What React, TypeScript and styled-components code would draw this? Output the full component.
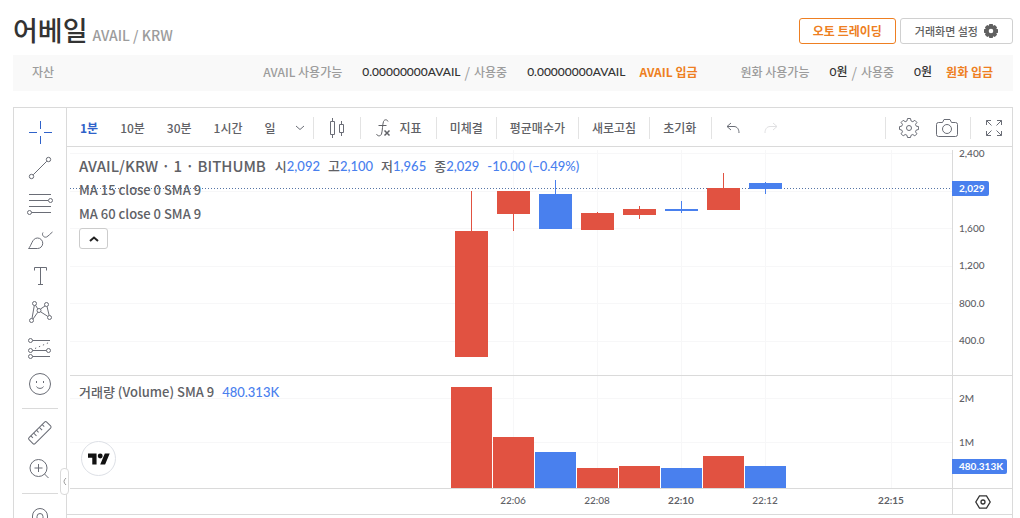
import React from 'react';
import styled, { createGlobalStyle } from 'styled-components';

const KR = `"Noto Sans CJK KR", "Noto Sans", sans-serif`;
const NUM = `Lato, "Noto Sans CJK KR", sans-serif`;
const RED = '#e15241';
const BLUE = '#4980ee';
const ORANGE = '#ee7f22';
const LINE = '#dadada';
const TEXT = '#606166';

const GlobalStyle = createGlobalStyle`
  *, *::before, *::after { box-sizing: border-box; }
  body { margin: 0; background: #fff; font-family: ${KR}; color: ${TEXT}; }
  button { font: inherit; color: inherit; background: none; border: 0; padding: 0; cursor: pointer; }
  svg { display: block; }
`;

const Page = styled.div`
  display: flex;
  flex-direction: column;
  height: 100vh;
  overflow: hidden;
  padding: 12px 7px 0 13px;
`;

const Header = styled.header`
  display: flex;
  align-items: center;
  justify-content: space-between;
  height: 38px;
`;

const Title = styled.h1`
  display: flex;
  align-items: baseline;
  gap: 5px;
  margin: 0;
  padding-top: 2px;
  font-size: 27px;
  line-height: 38px;
  font-weight: 500;
  color: #333;
`;

const Pair = styled.span`
  font-size: 14px;
  font-weight: 500;
  color: #9c9c9c;
`;

const HeaderActions = styled.div`
  display: flex;
  gap: 4px;
`;

const OutlineButton = styled.button<{ $accent?: boolean }>`
  display: flex;
  align-items: center;
  gap: 6px;
  height: 26px;
  padding: 0 ${(p) => (p.$accent ? 13 : 14)}px;
  border: 1px solid ${(p) => (p.$accent ? ORANGE : '#d0d0d0')};
  border-radius: 3px;
  font-size: ${(p) => (p.$accent ? 12 : 11)}px;
  line-height: 24px;
  font-weight: ${(p) => (p.$accent ? 700 : 500)};
  color: ${(p) => (p.$accent ? ORANGE : '#606060')};
`;

const AssetBar = styled.section`
  display: flex;
  align-items: center;
  flex-shrink: 0;
  height: 36px;
  margin-top: 5px;
  padding: 0 20px 2px 19px;
  background: #f9f9f9;
  font-size: 12px;
  line-height: 18px;
  font-weight: 500;
  color: #9c9c9c;
`;

const AssetGroup = styled.div<{ $first?: boolean }>`
  display: flex;
  align-items: center;
  margin-left: ${(p) => (p.$first ? 'auto' : '43px')};
`;

const Amount = styled.span`
  margin-left: 20px;
  font-family: ${NUM};
  color: #333;
`;

const Slash = styled.span`
  margin: 0 4px;
  font-size: 14px;
  font-weight: 400;
`;

const DepositLink = styled.a`
  margin-left: 14px;
  font-weight: 700;
  color: ${ORANGE};
  text-decoration: none;
`;

const Widget = styled.main`
  display: flex;
  flex: 1;
  min-height: 0;
  margin-top: 16px;
  border: 1px solid ${LINE};
  border-bottom: 0;
`;

const Sidebar = styled.nav`
  position: relative;
  display: flex;
  flex-direction: column;
  flex-shrink: 0;
  width: 53px;
  padding-top: 6px;
  border-right: 1px solid ${LINE};
`;

const ToolButton = styled.button<{ $active?: boolean }>`
  display: flex;
  align-items: center;
  justify-content: center;
  flex-shrink: 0;
  height: 36px;
  color: ${(p) => (p.$active ? '#2f62c9' : '#6a6d76')};
`;

const ToolRule = styled.hr`
  flex-shrink: 0;
  width: 36px;
  height: 1px;
  margin: 6px auto;
  border: 0;
  background: ${LINE};
`;

const CollapseHandle = styled.button`
  position: absolute;
  right: -3px;
  top: 360px;
  display: flex;
  align-items: center;
  justify-content: center;
  width: 9px;
  height: 27px;
  border: 1px solid ${LINE};
  border-radius: 4px;
  background: #fff;
  color: #9a9a9a;
`;

const Content = styled.div`
  display: flex;
  flex-direction: column;
  flex: 1;
  min-width: 0;
`;

const Toolbar = styled.div`
  display: flex;
  align-items: center;
  flex-shrink: 0;
  height: 39px;
  padding: 2px 0 0 2px;
  border-bottom: 1px solid ${LINE};
  font-size: 12px;
  line-height: 18px;
  font-weight: 500;
`;

const BarButton = styled.button<{ $pad?: number; $active?: boolean }>`
  display: flex;
  align-items: center;
  justify-content: center;
  gap: 9px;
  height: 36px;
  padding: 0 ${(p) => p.$pad ?? 11}px;
  white-space: nowrap;
  font-weight: ${(p) => (p.$active ? 700 : 500)};
  color: ${(p) => (p.$active ? '#2f62c9' : TEXT)};
`;

const IconButton = styled.button<{ $width: number; $faded?: boolean }>`
  display: flex;
  align-items: center;
  justify-content: center;
  width: ${(p) => p.$width}px;
  height: 36px;
  color: ${(p) => (p.$faded ? '#e0e0e2' : '#6a6d76')};
`;

const BarRule = styled.span<{ $gap?: number }>`
  width: 1px;
  height: 22px;
  margin: 0 ${(p) => p.$gap ?? 0}px;
  background: #e3e3e3;
`;

const Spacer = styled.span`
  flex: 1;
`;

const ChartGrid = styled.div`
  display: grid;
  grid-template-columns: minmax(0, 1fr) 60px;
  grid-template-rows: 226px 113px 25px;
  flex-shrink: 0;
  padding: 3px 0 0 3px;
  border-bottom: 1px solid ${LINE};
`;

const Pane = styled.div<{ $last?: boolean }>`
  position: relative;
  overflow: hidden;
  border-bottom: ${(p) => (p.$last ? 0 : 1)}px solid ${LINE};
`;

const AxisPane = styled(Pane)`
  border-left: 1px solid ${LINE};
  overflow: visible;
`;

const Plot = styled.svg`
  width: 100%;
  height: 100%;
`;

const AxisPlot = styled(Plot)`
  overflow: visible;
`;

const AxisLabel = styled.text<{ $bold?: boolean }>`
  font-family: ${NUM};
  font-size: 10px;
  font-weight: ${(p) => (p.$bold ? 700 : 500)};
  fill: ${TEXT};
`;

const AxisTag = styled.span<{ $top: number }>`
  position: absolute;
  left: -1px;
  top: ${(p) => p.$top}px;
  height: 15px;
  padding: 0 4px 0 7px;
  border-radius: 0 2px 2px 0;
  background: ${BLUE};
  color: #fff;
  font-family: ${NUM};
  font-size: 10px;
  line-height: 15px;
  font-weight: 700;
`;

const Legend = styled.div`
  position: absolute;
  left: 9px;
  top: 4px;
  display: flex;
  flex-direction: column;
  align-items: flex-start;
  font-size: 13px;
  line-height: 24px;
  font-weight: 500;
  white-space: nowrap;
`;

const LegendRow = styled.div`
  display: flex;
  align-items: center;
  gap: 8px;
  height: 24px;
`;

const Symbol = styled.span`
  font-size: 15px;
  margin-right: 1px;
`;

const Value = styled.span`
  font-family: ${NUM};
  color: ${BLUE};
`;

const FoldButton = styled.button`
  display: flex;
  align-items: center;
  justify-content: center;
  width: 29px;
  height: 21px;
  margin-top: 2px;
  border: 1px solid #ccc;
  border-radius: 3px;
  background: #fff;
  color: #222;
`;

const Brand = styled.a`
  position: absolute;
  left: 11px;
  bottom: 12px;
  display: flex;
  align-items: center;
  justify-content: center;
  width: 35px;
  height: 35px;
  border: 1px solid #dde0e6;
  border-radius: 50%;
  background: #fff;
`;

const AxisSettings = styled.button`
  display: flex;
  align-items: center;
  justify-content: center;
  width: 100%;
  height: 25px;
  color: #333;
`;

type IconProps = { w?: number; h?: number; sw?: number; children: React.ReactNode };
const Icon = ({ w = 28, h = 28, sw = 1, children }: IconProps) => (
  <svg width={w} height={h} viewBox={`0 0 ${w} ${h}`} fill="none" stroke="currentColor" strokeWidth={sw} aria-hidden="true">
    {children}
  </svg>
);

const tools: { name: string; icon: React.ReactNode; active?: boolean; rule?: boolean }[] = [
  { name: '십자선', active: true, icon: <path d="M14.5 3v8M14.5 18v8M3 14.5h8M18 14.5h8" /> },
  {
    name: '추세선',
    icon: <><circle cx="5.5" cy="22.5" r="2.2" /><circle cx="22.5" cy="5.5" r="2.2" /><path d="M7.2 20.8L20.8 7.2" /></>,
  },
  {
    name: '피보나치',
    icon: <><path d="M3 4.5h22M3 10.5h19M3 16.5h22M5.5 22.5h19.5" /><circle cx="24.5" cy="10.5" r="2" /><circle cx="3.5" cy="22.5" r="2" /></>,
  },
  {
    name: '브러시',
    icon: <path d="M2.5 22.5c3-2.500 3.500-10.500 9-10.500a5.200 5.200 0 010 10.500zM17 6.500c-1.500 2 .5 5.500 3.500 4.500c2-1 4-3.500 6-5" />,
  },
  { name: '텍스트', icon: <path d="M8.500 8.500v-3h12v3M14.500 5.500v17M12 22.500h5" /> },
  {
    name: '패턴',
    icon: <><circle cx="8.500" cy="5.500" r="2" /><circle cx="20.500" cy="6.500" r="2" /><circle cx="5.500" cy="22.500" r="2" /><circle cx="23.500" cy="19.500" r="2" /><circle cx="13" cy="12.500" r="2" /><path d="M8.300 7.500L6 20.500M9.500 7.200l2.300 3.700M19 8l-4.500 3M21 8.500l2.200 9M14.600 13.800l7.200 4.600M11.800 14.200L7 21" /></>,
  },
  {
    name: '예측',
    icon: <><circle cx="4.500" cy="6.500" r="2" /><circle cx="4.500" cy="16.500" r="2" /><circle cx="22.500" cy="16.500" r="2" /><circle cx="4.500" cy="22.500" r="2" /><path d="M6.500 6.500H24M6.500 16.500h14M6.500 22.500H24" /><path d="M9 14.500l14-6" strokeDasharray="1.300 3" /></>,
  },
  {
    name: '아이콘',
    rule: true,
    icon: <><circle cx="14" cy="14" r="10.500" /><path d="M10.500 16.500c1 2.500 6 2.500 7 0M10.500 11v2M17.500 11v2" /></>,
  },
  {
    name: '측정',
    icon: <g transform="rotate(-45 14 14)"><rect x="1.500" y="9.500" width="25" height="8.500" rx="1.500" /><path d="M5.500 9.500v3M9.500 9.500v4M13.500 9.500v3M17.500 9.500v4M21.500 9.500v3" /></g>,
  },
  {
    name: '확대',
    rule: true,
    icon: <><circle cx="12.500" cy="13" r="8.500" /><path d="M12.500 9v8M8.500 13h8M18.500 19l4 4" /></>,
  },
  {
    name: '자석',
    icon: <path d="M6.500 22V12a7.500 7.500 0 0115 0v10h-4.500V12.500a3 3 0 00-6 0V22z" />,
  },
];

// left, body top, body height, wick top, wick height (plot pixels), rising
const candles: [number, number, number, number, number, boolean][] = [
  [385, 81, 126, 41, 41, true],
  [427, 41, 23, 41, 40, true],
  [469, 44, 35, 30, 15, false],
  [511, 63, 17, 62, 2, true],
  [553, 59, 6, 56, 13, true],
  [595, 59, 2, 51, 12, false],
  [637, 38, 22, 23, 16, true],
  [679, 33, 6, 32, 12, false],
];

// left, height, rising
const volumes: [number, number, boolean][] = [
  [381, 101, true],
  [423, 51, true],
  [465, 36, false],
  [507, 20, true],
  [549, 22, true],
  [591, 20, false],
  [633, 32, true],
  [675, 22, false],
];

const timeGrid = [443, 527, 611, 695, 821];
const priceGrid = [3, 41, 78, 116, 153, 191];
const volumeGrid = [22, 66];

const Grid = ({ rows }: { rows: number[] }) => (
  <g stroke="#f7f7f8" shapeRendering="crispEdges">
    {timeGrid.map((x) => <line key={x} x1={x + 0.5} x2={x + 0.5} y1={0} y2={240} />)}
    {rows.map((y) => <line key={y} x1={-2000} x2={882} y1={y + 0.5} y2={y + 0.5} />)}
  </g>
);

const ohlc = [['시', '2,092'], ['고', '2,100'], ['저', '1,965'], ['종', '2,029']];

export default function App() {
  return (
    <>
      <GlobalStyle />
      <Page>
        <Header>
          <Title>어베일<Pair>AVAIL / KRW</Pair></Title>
          <HeaderActions>
            <OutlineButton $accent>오토 트레이딩</OutlineButton>
            <OutlineButton>
              거래화면 설정
              <svg width="14" height="14" viewBox="0 0 14 14" fill="#606060" aria-hidden="true">
                <path fillRule="evenodd" d="M5.300 0h3.400l.5 1.700 1.600-.8 2.300 2.300-.8 1.600 1.700.5v3.400l-1.700.5.8 1.600-2.300 2.300-1.600-.8-.5 1.700H5.300l-.5-1.700-1.600.8L.9 10.800l.8-1.600L0 8.700V5.300l1.700-.5L.9 3.200 3.200.9l1.600.8zM7 4.700a2.300 2.300 0 100 4.600 2.300 2.300 0 000-4.600z" />
              </svg>
            </OutlineButton>
          </HeaderActions>
        </Header>

        <AssetBar>
          <span>자산</span>
          <AssetGroup $first>
            <span>AVAIL 사용가능</span>
            <Amount>0.00000000AVAIL</Amount>
            <Slash>/</Slash>
            <span>사용중</span>
            <Amount>0.00000000AVAIL</Amount>
            <DepositLink href="#avail">AVAIL 입금</DepositLink>
          </AssetGroup>
          <AssetGroup>
            <span>원화 사용가능</span>
            <Amount>0원</Amount>
            <Slash>/</Slash>
            <span>사용중</span>
            <Amount>0원</Amount>
            <DepositLink href="#krw">원화 입금</DepositLink>
          </AssetGroup>
        </AssetBar>

        <Widget>
          <Sidebar>
            {tools.map((t) => (
              <React.Fragment key={t.name}>
                <ToolButton $active={t.active} aria-label={t.name}><Icon>{t.icon}</Icon></ToolButton>
                {t.rule && <ToolRule />}
              </React.Fragment>
            ))}
            <CollapseHandle aria-label="접기">
              <Icon w={5} h={9}><path d="M4 1Q0 4.500 4 8" /></Icon>
            </CollapseHandle>
          </Sidebar>

          <Content>
            <Toolbar>
              <BarButton $active>1분</BarButton>
              <BarButton>10분</BarButton>
              <BarButton>30분</BarButton>
              <BarButton>1시간</BarButton>
              <BarButton>일</BarButton>
              <IconButton $width={26} aria-label="시간 간격">
                <Icon w={10} h={6}><path d="M1 1l4 3.500L9 1" /></Icon>
              </IconButton>
              <BarRule />
              <IconButton $width={46} aria-label="캔들">
                <Icon w={16} h={20}><path d="M1.500 3.500h4v13h-4zM3.500 0v3.500M3.500 16.500V20M10.500 6.500h4v8h-4zM12.500 3v3.500M12.500 14.500V18" /></Icon>
              </IconButton>
              <BarRule />
              <BarButton $pad={14}>
                <Icon w={16} h={20}><path d="M13 3.500c-.5-2-3.500-2.500-4.500 0C7.500 6 7.500 13 6.500 16c-1 2.500-4 2.500-5 0M3.500 7.500h8" /><path d="M9.500 12.500l5 5M14.500 12.500l-5 5" strokeWidth="1.500" /></Icon>
                지표
              </BarButton>
              <BarRule />
              <BarButton $pad={13}>미체결</BarButton>
              <BarRule />
              <BarButton $pad={13}>평균매수가</BarButton>
              <BarRule />
              <BarButton $pad={13}>새로고침</BarButton>
              <BarRule />
              <BarButton $pad={13}>초기화</BarButton>
              <BarRule $gap={2} />
              <IconButton $width={38} aria-label="실행 취소">
                <Icon w={14} h={12}><path d="M5 1L1 4.500 5 8M1 4.500h7c3 0 5 2.500 5 6.500" /></Icon>
              </IconButton>
              <IconButton $width={38} $faded aria-label="다시 실행">
                <Icon w={14} h={12}><path d="M9 1l4 3.500L9 8M13 4.500H6c-3 0-5 2.500-5 6.500" /></Icon>
              </IconButton>
              <Spacer />
              <BarRule $gap={4} />
              <IconButton $width={38} aria-label="설정">
                <Icon w={20} h={20}>
                  <path strokeLinejoin="round" d="M8.500.5h3l.5 2.400 1.800.8 2-1.400 2.100 2.100-1.400 2 .8 1.800 2.300.4v2.900l-2.300.5-.8 1.800 1.400 2-2.100 2.100-2-1.400-1.800.8-.5 2.200h-3L8 17.300l-1.800-.8-2 1.400-2.100-2.100 1.400-2-.8-1.800-2.200-.5V8.600l2.200-.4.8-1.800-1.400-2 2.100-2.100 2 1.400L8 2.900z" />
                  <circle cx="10" cy="10" r="2.500" />
                </Icon>
              </IconButton>
              <IconButton $width={38} aria-label="스냅샷">
                <Icon w={22} h={18}>
                  <path d="M2.500 3.500h4l1.500-3h6l1.500 3h4a2 2 0 012 2v10a2 2 0 01-2 2h-17a2 2 0 01-2-2v-10a2 2 0 012-2z" />
                  <circle cx="11" cy="10" r="4.500" />
                </Icon>
              </IconButton>
              <BarRule $gap={4} />
              <IconButton $width={37} aria-label="전체 화면">
                <Icon w={18} h={18}><path d="M1.500 6V1.500H6M1.500 1.500l5 5M12 1.500h4.500V6M16.500 1.500l-5 5M1.500 12v4.500H6M1.500 16.500l5-5M12 16.500h4.500V12M16.500 16.500l-5-5" /></Icon>
              </IconButton>
            </Toolbar>

            <ChartGrid>
              <Pane>
                <Plot viewBox="0 0 882 225" preserveAspectRatio="xMaxYMin slice">
                  <Grid rows={priceGrid} />
                  <line x1={0} x2={882} y1={38.5} y2={38.5} stroke="#5574a6" strokeDasharray="1 2" />
                  {candles.map(([x, top, h, wickTop, wickH, up]) => (
                    <g key={x} fill={up ? RED : BLUE} shapeRendering="crispEdges">
                      <rect x={x + 16} y={wickTop} width={1} height={wickH} />
                      <rect x={x} y={top} width={33} height={h} />
                    </g>
                  ))}
                </Plot>
                <Legend>
                  <LegendRow>
                    <Symbol>AVAIL/KRW · 1 · BITHUMB</Symbol>
                    {ohlc.map(([k, v]) => <span key={k}>{k}<Value>{v}</Value></span>)}
                    <Value>-10.00 (−0.49%)</Value>
                  </LegendRow>
                  <span>MA 15 close 0 SMA 9</span>
                  <span>MA 60 close 0 SMA 9</span>
                  <FoldButton aria-label="지표 접기">
                    <Icon w={10} h={6} sw={2}><path d="M1 5l4-3.500L9 5" /></Icon>
                  </FoldButton>
                </Legend>
              </Pane>
              <AxisPane>
                <AxisPlot>
                  <AxisLabel x={6} y={7}>2,400</AxisLabel>
                  <AxisLabel x={6} y={82}>1,600</AxisLabel>
                  <AxisLabel x={6} y={119}>1,200</AxisLabel>
                  <AxisLabel x={6} y={157}>800.0</AxisLabel>
                  <AxisLabel x={6} y={194}>400.0</AxisLabel>
                </AxisPlot>
                <AxisTag $top={31}>2,029</AxisTag>
              </AxisPane>

              <Pane>
                <Plot viewBox="0 0 882 112" preserveAspectRatio="xMaxYMin slice">
                  <Grid rows={volumeGrid} />
                  {volumes.map(([x, h, up]) => (
                    <rect key={x} x={x} y={112 - h} width={41} height={h} fill={up ? RED : BLUE} />
                  ))}
                </Plot>
                <Legend>
                  <LegendRow><span>거래량 (Volume) SMA 9</span><Value>480.313K</Value></LegendRow>
                </Legend>
                <Brand href="#tradingview" aria-label="TradingView">
                  <svg width="22" height="12" viewBox="0 0 36 18" fill="#111" aria-hidden="true">
                    <path d="M14 18H7V7H0V0h14v18zM28 18h-8l7.500-18h8L28 18z" />
                    <circle cx="20" cy="4" r="4" />
                  </svg>
                </Brand>
              </Pane>
              <AxisPane>
                <AxisPlot>
                  <AxisLabel x={6} y={26}>2M</AxisLabel>
                  <AxisLabel x={6} y={70}>1M</AxisLabel>
                </AxisPlot>
                <AxisTag $top={83}>480.313K</AxisTag>
              </AxisPane>

              <Pane $last>
                <Plot viewBox="0 0 882 25" preserveAspectRatio="xMaxYMin slice">
                  {['22:06', '22:08', '22:10', '22:12', '22:15'].map((t, i) => (
                    <AxisLabel key={t} x={timeGrid[i]} y={15} textAnchor="middle" $bold={i === 2 || i === 4}>{t}</AxisLabel>
                  ))}
                </Plot>
              </Pane>
              <AxisPane $last>
                <AxisSettings aria-label="축 설정">
                  <Icon w={16} h={14}><path d="M4.500.8h7L15.200 7l-3.700 6.200h-7L.8 7z" strokeWidth="1.300" /><circle cx="8" cy="7" r="2" strokeWidth="1.300" /></Icon>
                </AxisSettings>
              </AxisPane>
            </ChartGrid>
          </Content>
        </Widget>
      </Page>
    </>
  );
}
